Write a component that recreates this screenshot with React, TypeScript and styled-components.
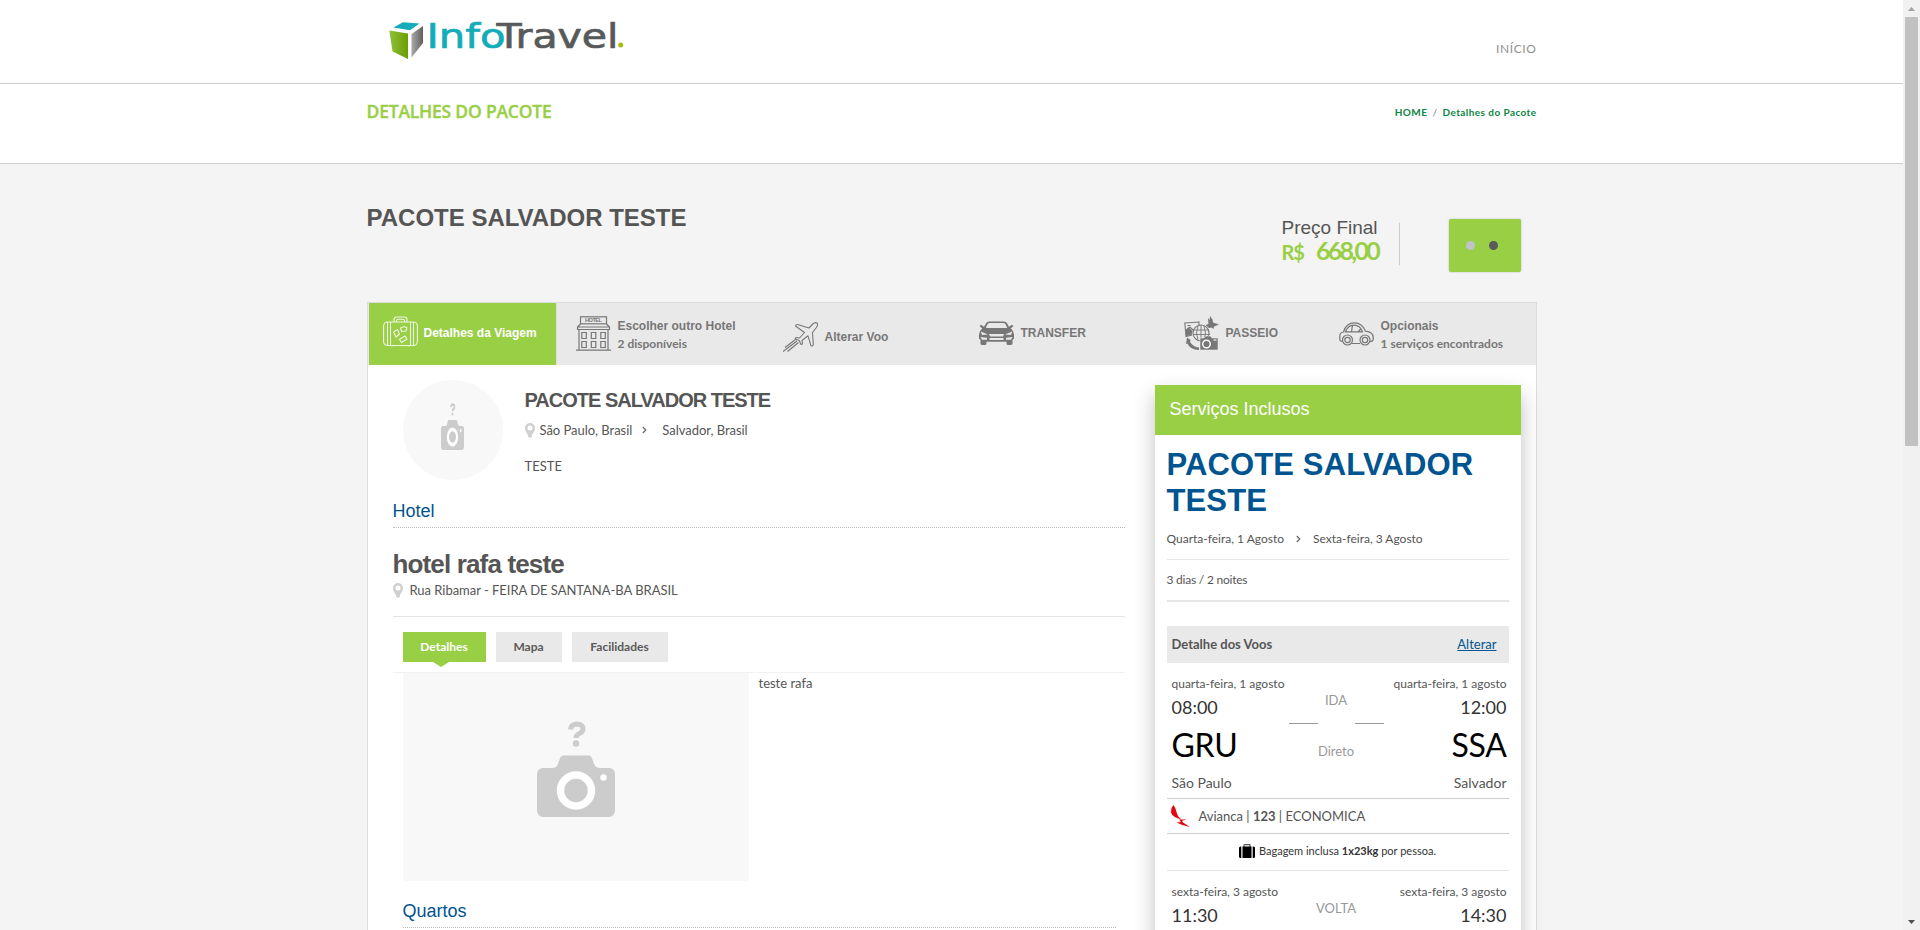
import React from "react";
import styled, { createGlobalStyle, css } from "styled-components";

const GREEN = "#98cf45";
const BLUE = "#005490";
const SANS = `"Liberation Sans", Arial, sans-serif`;
const LATO = `Lato, "Open Sans", sans-serif`;

const GlobalStyle = createGlobalStyle`
  * { box-sizing: border-box; }
  html, body { margin: 0; padding: 0; height: 930px; overflow: hidden; background: #f4f4f4; }
  body { font-family: ${LATO}; font-size: 13px; line-height: 20px; color: #555; }
  h1, h2, h3, p { margin: 0; }
  svg { display: block; flex: none; }
`;

const Window = styled.div`
  display: flex;
  width: 1920px;
  height: 930px;
  overflow: hidden;
`;

const Page = styled.div`
  width: 1903px;
  height: 930px;
  overflow: hidden;
`;

const Scrollbar = styled.div`
  width: 17px;
  height: 930px;
  background: #f1f1f1;
  display: flex;
  flex-direction: column;
  align-items: center;
`;

const ScrollArrow = styled.div`
  height: 17px;
  display: flex;
  align-items: center;
  justify-content: center;
`;

const Thumb = styled.div`
  width: 13px;
  height: 429px;
  margin: 0 0 auto;
  background: #c1c1c1;
`;

const Bar = styled.header<{ $height: number }>`
  height: ${(p) => p.$height}px;
  background: #fff;
  border-bottom: 1px solid #ccc;
`;

const Container = styled.div`
  width: 1170px;
  margin: 0 auto;
  display: flex;
  justify-content: space-between;
  align-items: flex-start;
`;

const LogoLink = styled.a`
  padding: 8px 0 0 21.5px;
`;

const NavLink = styled.a`
  margin-top: 39px;
  font-size: 12px;
  letter-spacing: 0.6px;
  color: #909090;
`;

const SectionTitle = styled.h2`
  margin-top: 14px;
  font: 600 17.5px/26px "Open Sans", sans-serif;
  letter-spacing: -0.2px;
  color: ${GREEN};
  -webkit-text-stroke: 0.35px ${GREEN};
`;

const Crumbs = styled.nav`
  display: flex;
  gap: 5px;
  margin-top: 18px;
  font-size: 10px;
  font-weight: 700;
  letter-spacing: 0.43px;
  color: #999;
  a { color: #0c8442; }
`;

const PackageTitle = styled.h1`
  margin-top: 39px;
  font: 700 24px/30px ${SANS};
  color: #555;
`;

const Offer = styled.div`
  height: 138px;
  padding-right: 16px;
  display: flex;
  align-items: flex-start;
`;

const Price = styled.div`
  width: 117px;
  margin-top: 53px;
`;

const PriceLabel = styled.div`
  font: 400 19px/22px ${SANS};
  color: #555;
`;

const PriceValue = styled.div`
  display: flex;
  align-items: baseline;
  gap: 12px;
  height: 24px;
  line-height: 22px;
  color: ${GREEN};
  font-weight: 700;
`;

const Currency = styled.span`
  font-size: 20px;
  letter-spacing: -1px;
`;

const Amount = styled.span`
  font-size: 25px;
  letter-spacing: -2.7px;
`;

const Divider = styled.div`
  width: 1px;
  height: 42px;
  margin-top: 59px;
  background: #ccc;
`;

const LoadingButton = styled.button`
  width: 72px;
  height: 53px;
  margin: 55px 0 0 49px;
  padding: 0 0 0 17px;
  border: 0;
  border-radius: 2px;
  background: ${GREEN};
  box-shadow: 0 0 2px rgba(0, 0, 0, 0.25);
  display: flex;
  align-items: center;
  gap: 14px;
`;

const Dot = styled.i<{ $color: string }>`
  width: 9px;
  height: 9px;
  border-radius: 50%;
  background: ${(p) => p.$color};
`;

const Panel = styled.main`
  width: 1170px;
  height: 640px;
  margin: 0 auto;
  background: #fff;
  border: 1px solid #dcdcdc;
`;

const Steps = styled.nav`
  display: flex;
  height: 62px;
  padding-left: 1px;
  background: #e9e9e9;
`;

const Step = styled.a<{ $width: number; $active?: boolean; $drop: number }>`
  width: ${(p) => p.$width}px;
  height: 62px;
  padding: ${(p) => Math.max(p.$drop, 0)}px 0 ${(p) => Math.max(-p.$drop, 0)}px
    ${(p) => (p.$active ? 14 : 19)}px;
  display: flex;
  align-items: center;
  gap: ${(p) => (p.$active ? 6 : 7)}px;
  color: #777;
  font: 700 12px/18px ${SANS};
  ${(p) =>
    p.$active &&
    css`
      color: #fff;
      background: ${GREEN};
      width: ${p.$width + 1}px;
      border-right: 1px solid #dedede;
    `}
`;

const StepLabel = styled.div`
  padding-top: 2px;
  small { display: block; font: 700 12px/18px ${LATO}; }
`;

const Body = styled.div`
  display: flex;
  padding: 0 15px 0 25px;
  justify-content: space-between;
  align-items: flex-start;
`;

const Details = styled.section`
  width: 732px;
  padding-top: 15px;
`;

const Summary = styled.div`
  display: flex;
  height: 100px;
  padding-left: 10px;
  gap: 22px;
`;

const Thumbnail = styled.div`
  width: 100px;
  height: 100px;
  border-radius: 50%;
  background: #f8f8f8;
  display: flex;
  justify-content: center;
  padding-top: 23px;
`;

const SummaryTitle = styled.h2`
  margin-top: 8px;
  font: 700 20px/24px ${SANS};
  letter-spacing: -1px;
  color: #555;
`;

const Place = styled.div<{ $gap: number; $top: number }>`
  display: flex;
  align-items: center;
  gap: ${(p) => p.$gap}px;
  height: 20px;
  margin-top: ${(p) => p.$top}px;
  letter-spacing: -0.03px;
`;

const Arrow = styled.span<{ $before: number; $after: number }>`
  margin: 0 ${(p) => p.$after}px 0 ${(p) => p.$before}px;
`;

const Note = styled.p`
  margin-top: 16px;
`;

const Heading = styled.h3<{ $top: number; $inset?: boolean }>`
  margin-top: ${(p) => p.$top}px;
  ${(p) => p.$inset && "margin-left: 10px; margin-right: 9px;"}
  padding-bottom: 4px;
  font: 400 18px/24px ${SANS};
  color: ${BLUE};
  border-bottom: 1px dotted #bbb;
`;

const HotelBox = styled.div`
  padding: 21px 0 16px;
  border-bottom: 1px solid #e4e4e4;
`;

const HotelName = styled.h2`
  font: 700 26px/30px ${SANS};
  letter-spacing: -0.85px;
  color: #555;
`;

const Tabs = styled.div`
  display: flex;
  gap: 10px;
  height: 56px;
  padding: 15px 10px 10px;
  border-bottom: 1px solid #f2f2f2;
`;

const Tab = styled.a<{ $width: number; $active?: boolean }>`
  position: relative;
  width: ${(p) => p.$width}px;
  height: 30px;
  text-align: center;
  font-size: 12px;
  font-weight: 700;
  line-height: 29px;
  background: ${(p) => (p.$active ? GREEN : "#e9e9e9")};
  color: ${(p) => (p.$active ? "#fff" : "#5a5a5a")};
  ${(p) =>
    p.$active &&
    css`
      &::after {
        content: "";
        position: absolute;
        left: 30px;
        top: 30px;
        border: 8px solid transparent;
        border-top: 5px solid ${GREEN};
        border-bottom: 0;
      }
    `}
`;

const Gallery = styled.div`
  display: flex;
  gap: 10px;
  padding-left: 10px;
`;

const Photo = styled.div`
  width: 346px;
  height: 208px;
  background: #f8f8f8;
  display: flex;
  justify-content: center;
  padding-top: 48px;
`;

const Sidebar = styled.aside`
  width: 366px;
  height: 620px;
  margin-top: 20px;
  background: #fff;
  box-shadow: 0 10px 20px rgba(0, 0, 0, 0.25);
`;

const SidebarHeader = styled.div`
  height: 50px;
  padding-left: 15px;
  background: ${GREEN};
  color: #fff;
  font: 400 18px/48px ${SANS};
`;

const SidebarBody = styled.div`
  padding: 12px 12px 0;
`;

const SidebarTitle = styled.h1`
  height: 72px;
  font: 700 31px/36px ${SANS};
  letter-spacing: 0.12px;
  color: ${BLUE};
`;

const InfoLine = styled.div<{ $rule: number }>`
  display: flex;
  align-items: center;
  padding: 10px 0;
  font-size: 12px;
  border-bottom: ${(p) => p.$rule}px solid #e7e7e7;
`;

const Nights = styled.span`
  letter-spacing: -0.22px;
`;

const FlightsBar = styled.div`
  height: 37px;
  margin-top: 24px;
  padding: 0 12px 2px 5px;
  display: flex;
  align-items: center;
  justify-content: space-between;
  background: #e9e9e9;
  strong { font-weight: 700; }
  a { color: ${BLUE}; text-decoration: underline; }
`;

const Flight = styled.div`
  display: flex;
  height: 136px;
  padding: 11px 2px 0 5px;
  border-bottom: 1px solid #ccc;
`;

const Stop = styled.div<{ $end?: boolean }>`
  width: ${(p) => (p.$end ? 123 : 117)}px;
  text-align: ${(p) => (p.$end ? "right" : "left")};
`;

const StopDate = styled.div`
  font-size: 12px;
  white-space: nowrap;
`;

const StopTime = styled.div`
  margin-top: 2px;
  font-size: 18px;
  line-height: 22px;
  color: #333;
`;

const StopCode = styled.div`
  margin-top: 7px;
  font-size: 32px;
  line-height: 40px;
  letter-spacing: -0.3px;
  color: #000;
`;

const StopCity = styled.div`
  margin-top: 8px;
  font-size: 14px;
`;

const Route = styled.div`
  width: 95px;
  padding-top: 16px;
  text-align: center;
  color: #999;
`;

const RouteLines = styled.div`
  display: flex;
  justify-content: space-between;
  height: 31px;
  padding-top: 13px;
  &::before, &::after {
    content: "";
    width: 29px;
    height: 1px;
    background: #999;
  }
`;

const Airline = styled.div`
  display: flex;
  align-items: center;
  gap: 9px;
  height: 35px;
  padding-left: 4px;
  border-bottom: 1px solid #ccc;
`;

const Baggage = styled.div`
  display: flex;
  align-items: center;
  justify-content: center;
  gap: 4px;
  height: 37px;
  padding-bottom: 3px;
  font-size: 11px;
  color: #333;
  border-bottom: 1px solid #e5e5e5;
`;

function Logo() {
  return (
    <svg width="240" height="56" viewBox="388 8 240 56">
      <defs>
        <linearGradient id="face" x1="0" x2="1">
          <stop offset="0" stopColor="#8fc13a" />
          <stop offset="1" stopColor="#6d9c05" />
        </linearGradient>
        <linearGradient id="side" x1="0" x2="1">
          <stop offset="0" stopColor="#aaa" />
          <stop offset="1" stopColor="#606060" />
        </linearGradient>
      </defs>
      <path d="M393.500 27.500L403 22.200L419.500 23.500L410 30.300Z" fill="#13acb8" />
      <path d="M389.300 30.500L408 33.500V59L392.500 51.500Z" fill="url(#face)" />
      <path d="M411.500 34L423 26V43L411.500 57.500Z" fill="url(#side)" />
      <g fontFamily="DejaVu Sans, sans-serif" fontSize="34" strokeWidth=".7">
        <text x="426.500" y="47.500" fill="#13acb8" stroke="#13acb8" textLength="79" lengthAdjust="spacingAndGlyphs">Info</text>
        <text x="496.500" y="47.500" fill="#575a5b" stroke="#575a5b" textLength="122" lengthAdjust="spacingAndGlyphs">Travel</text>
      </g>
      <circle cx="620.700" cy="45" r="2.500" fill="#a9bd0b" />
    </svg>
  );
}

function Suitcase() {
  return (
    <svg width="35" height="35" viewBox="0 0 35 35" fill="none" stroke="#fff" strokeWidth="1.1" opacity=".85">
      <rect x=".6" y="6" width="33.8" height="23.5" rx="4" />
      <path d="M4.500 6v23.500M7.500 6v23.500M27.500 6v23.500M30.500 6v23.500M11 6V3.500Q11 1 13.500 1h8Q24 1 24 3.500V6M13.500 6V4.500Q13.500 3.200 15 3.200h5Q21.500 3.200 21.500 4.500V6M9 30.500v-1M26 30.500v-1" />
      <path d="M10.500 16l4-2.500 2 4.500-3.500 3zM17.500 12l4-1.500 2.500 1.500-1 3-4.500.5zM16.500 23.500l5.500-3.500 2 3-5.500 3.500z" />
    </svg>
  );
}

function HotelIcon() {
  return (
    <svg width="35" height="36" viewBox="0 0 35 36" fill="none" stroke="#777" strokeWidth="1.200">
      <rect x="4.500" y=".8" width="26" height="7" />
      <text x="17.500" y="6.400" fontFamily={SANS} fontSize="5.600" fontWeight="700" textAnchor="middle" fill="#777" stroke="none" textLength="17">HOTEL</text>
      <path d="M4.500 8L1.500 11V13.500H33.500V11L30.500 8M1.500 11H33.500M3 13.500V34M32 13.500V34M0 34.200H35" />
      <path d="M5.800 16.500h4.500v6H5.800zM15.300 16.500h4.500v6h-4.500zM24.800 16.500h4.500v6h-4.500zM5.800 25.500h4.500v6H5.800zM15.300 25.500h4.500v6h-4.500zM24.800 25.500h4.500v6h-4.500z" />
    </svg>
  );
}

function PlaneIcon() {
  return (
    <svg width="35" height="35" viewBox="0 0 35 35" fill="none" stroke="#777" strokeWidth="1.100" strokeLinejoin="round">
      <path d="M34.300 3.200C33 2.400 31 2.800 29.800 4L26 8 14.500 4.500C13.300 4.300 12.500 5.300 12.800 6.300L21.500 12.500 16.500 18 12.800 17.500 12.200 19 16.200 20.500 18 24.500 19.500 24 19 20.500 25 15.800 28 25.800C29 26.300 30.200 25.500 30.300 24.500L29.500 12.500 33 8C34.200 6.500 35 4.500 34.300 3.200Z" />
      <path d="M12.500 19.500L2 27.500M14 21L0 31.500M15.500 22.500L4.500 31.500" />
    </svg>
  );
}

function CarFront() {
  return (
    <svg width="35" height="24" viewBox="0 0 35 24">
      <path fillRule="evenodd" fill="#777" d="M10 .5H25Q27 .7 28 2.300L30 5.800 33 3.800 34.500 5 31.800 7.500Q35 10 35 13.500V17.500L33.500 19V23Q33 24 31.500 24H29Q27.700 24 27.500 22.500V20.800H7.500V22.500Q7.300 24 6 24H3.500Q2 24 1.500 23V19L0 17.500V13.500Q0 10 3.200 7.500L.5 5 2 3.800 5 5.800 7 2.300Q8 .7 10 .5ZM10.500 2Q9 2.100 8.300 3.500L6.800 7H28.200L26.700 3.500Q26 2.100 24.500 2ZM1.800 10.500L9 13.500 3 14ZM33.200 10.500L26 13.500 32 14ZM10 13H25L24 15.500H11ZM1.500 16L8 16.800V18.800H3ZM33.500 16L27 16.800V18.800H32ZM10.500 17H24.500V19H10.500Z" />
    </svg>
  );
}

function TourIcon() {
  return (
    <svg width="35" height="35" viewBox="0 0 35 35" fill="none" stroke="#777" strokeWidth="1.100">
      <path d="M8 19L2 20.500 .8 7 15 6V10M3 15l3-4 3 3M3.500 9.500h3" />
      <path d="M1.500 14l3-3 4 4-1 4-5.500 1z" fill="#777" stroke="none" />
      <circle cx="17" cy="17" r="8" />
      <path d="M9 14h16M9 18.500h17M17 9v16M14 10q-3 7 0 14M20 10q3 7 0 14" strokeWidth=".9" />
      <path d="M25 12L21.500 9 24.500 8 24 2 25.800 4 26 0 28.500 3.500 29 6.500 35 8.500 30 10.500 29.500 13 27.500 11.500Z" fill="#777" stroke="none" />
      <path d="M3 21.500L6.500 24 6 26Q9.500 31 15 31.500V34Q6 34 3.500 27.500L2 28Z" fill="#777" stroke="none" />
      <path d="M16 22H20L21.500 20H26.500L28 22H34V34H16Z" fill="#777" stroke="#e9e9e9" strokeWidth=".6" />
      <circle cx="22.500" cy="28" r="3.800" stroke="#fff" strokeWidth="1.400" />
      <path d="M29.500 24h3" stroke="#fff" />
    </svg>
  );
}

function CarSide() {
  return (
    <svg width="35" height="24" viewBox="0 0 35 24" fill="none" stroke="#777" strokeWidth="1.200">
      <path d="M3.500 19.500Q.8 19.500 .8 17V14Q.8 10.500 4.500 10Q7 .8 15.500 .8Q23 .8 26.500 9.200Q34.200 10 34.200 15.500V17.500Q34 19.500 31 19.500M13 21.500H21" />
      <path d="M6.500 9.800Q9 3.200 15 3.200Q21 3.200 23.500 9.800ZM13.500 3.300L12.500 9.800M19.500 9.500l2.500-3" />
      <circle cx="8.500" cy="18" r="5" />
      <circle cx="8.500" cy="18" r="2.700" />
      <circle cx="26" cy="18" r="5" />
      <circle cx="26" cy="18" r="2.700" />
    </svg>
  );
}

function Pin() {
  return (
    <svg width="10" height="15" viewBox="0 0 10 15">
      <path fillRule="evenodd" fill="#d0d0d0" d="M5 0A5 5 0 0 1 10 5C10 8.500 7 10.500 6.700 14Q5 15.500 3.300 14C3 10.500 0 8.500 0 5A5 5 0 0 1 5 0ZM5 2.500A2.500 2.500 0 1 0 5 7.500A2.500 2.500 0 1 0 5 2.500Z" />
    </svg>
  );
}

function Chevron() {
  return (
    <svg width="5" height="8" viewBox="0 0 5 8" fill="none" stroke="#666" strokeWidth="1.200">
      <path d="M.8 1L3.800 4L.8 7" />
    </svg>
  );
}

function NoPhoto({ width, height }: { width: number; height: number }) {
  return (
    <svg width={width} height={height} viewBox="0 0 78 96" preserveAspectRatio="none">
      <path d="M33.500 8.500Q34 3.500 39.500 3Q46 3 46 8Q46 11 42.500 12.500Q39 13.800 39 17" fill="none" stroke="#ccc" strokeWidth="5" />
      <circle cx="39" cy="22.500" r="3.200" fill="#ccc" />
      <path d="M6 47H16Q20 46.500 21 43L23 37Q24 34.500 26 34.500H52Q54 34.500 55 37L57 43Q58.500 46.500 62 47H72Q78 47.500 78 53V90Q77.500 95.500 72 96H6Q.5 95.500 0 90V53Q.5 47.500 6 47Z" fill="#ccc" />
      <circle cx="39" cy="69.500" r="15.500" fill="none" stroke="#fff" strokeWidth="7.500" />
      <circle cx="66.500" cy="56.500" r="3.200" fill="#fff" />
    </svg>
  );
}

function AviancaMark() {
  return (
    <svg width="19" height="22" viewBox="0 0 19 22" fill="#e30613">
      <path d="M2.500 0Q-.5 3 .2 8Q1.500 12 10.500 14.500Q6.500 11.500 5.500 7Q4.800 3 2.500 0Z" />
      <path d="M8 14.500H16L11 15.700L12 17.500L19 22Q11 20.500 5.500 17.500L10 17Z" />
    </svg>
  );
}

function BagIcon() {
  return (
    <svg width="16" height="14" viewBox="0 0 16 14">
      <path d="M5 3V1.200Q5 .7 5.500 .7H10.500Q11 .7 11 1.200V3" fill="none" stroke="#555" strokeWidth="1.200" />
      <path d="M3.500 2.500H12.500V14H3.500ZM2.300 2.500V14H1.500Q0 14 0 12.500V4Q0 2.500 1.500 2.500ZM13.700 2.500V14H14.500Q16 14 16 12.500V4Q16 2.500 14.500 2.500Z" fill="#000" />
    </svg>
  );
}

type Leg = { date: string; time: string; code?: string; city?: string };

function FlightLeg({ from, to, kind, stops }: { from: Leg; to: Leg; kind: string; stops?: string }) {
  const stop = (leg: Leg, end?: boolean) => (
    <Stop $end={end}>
      <StopDate>{leg.date}</StopDate>
      <StopTime>{leg.time}</StopTime>
      {leg.code && <StopCode>{leg.code}</StopCode>}
      {leg.city && <StopCity>{leg.city}</StopCity>}
    </Stop>
  );
  return (
    <Flight>
      {stop(from)}
      <Route>
        <div>{kind}</div>
        <RouteLines />
        {stops && <div>{stops}</div>}
      </Route>
      {stop(to, true)}
    </Flight>
  );
}

export default function App() {
  return (
    <Window>
      <GlobalStyle />
      <Page>
        <Bar $height={84}>
          <Container>
            <LogoLink><Logo /></LogoLink>
            <NavLink>INÍCIO</NavLink>
          </Container>
        </Bar>
        <Bar $height={80}>
          <Container>
            <SectionTitle>DETALHES DO PACOTE</SectionTitle>
            <Crumbs><a>HOME</a><span>/</span><a>Detalhes do Pacote</a></Crumbs>
          </Container>
        </Bar>
        <Container>
          <PackageTitle>PACOTE SALVADOR TESTE</PackageTitle>
          <Offer>
            <Price>
              <PriceLabel>Preço Final</PriceLabel>
              <PriceValue><Currency>R$</Currency><Amount>668,00</Amount></PriceValue>
            </Price>
            <Divider />
            <LoadingButton><Dot $color="#bdc3c7" /><Dot $color="#5a5a5a" /></LoadingButton>
          </Offer>
        </Container>
        <Panel>
          <Steps>
            <Step $width={187} $drop={-2} $active><Suitcase />Detalhes da Viagem</Step>
            <Step $width={207} $drop={-1}><HotelIcon /><StepLabel>Escolher outro Hotel<small>2 disponíveis</small></StepLabel></Step>
            <Step $width={196} $drop={6}><PlaneIcon />Alterar Voo</Step>
            <Step $width={205} $drop={-2}><CarFront />TRANSFER</Step>
            <Step $width={155} $drop={-2}><TourIcon />PASSEIO</Step>
            <Step $width={216} $drop={0}><CarSide /><StepLabel>Opcionais<small>1 serviços encontrados</small></StepLabel></Step>
          </Steps>
          <Body>
            <Details>
              <Summary>
                <Thumbnail><NoPhoto width={23} height={47} /></Thumbnail>
                <div>
                  <SummaryTitle>PACOTE SALVADOR TESTE</SummaryTitle>
                  <Place $gap={5} $top={8}>
                    <Pin />
                    <span>São Paulo, Brasil</span>
                    <Arrow $before={5} $after={10}><Chevron /></Arrow>
                    <span>Salvador, Brasil</span>
                  </Place>
                  <Note>TESTE</Note>
                </div>
              </Summary>
              <Heading $top={19}>Hotel</Heading>
              <HotelBox>
                <HotelName>hotel rafa teste</HotelName>
                <Place $gap={7} $top={1}><Pin /><span>Rua Ribamar - FEIRA DE SANTANA-BA BRASIL</span></Place>
              </HotelBox>
              <Tabs>
                <Tab $width={83} $active>Detalhes</Tab>
                <Tab $width={66}>Mapa</Tab>
                <Tab $width={96}>Facilidades</Tab>
              </Tabs>
              <Gallery>
                <Photo><NoPhoto width={78} height={96} /></Photo>
                <p>teste rafa</p>
              </Gallery>
              <Heading $top={18} $inset>Quartos</Heading>
            </Details>
            <Sidebar>
              <SidebarHeader>Serviços Inclusos</SidebarHeader>
              <SidebarBody>
                <SidebarTitle>PACOTE SALVADOR TESTE</SidebarTitle>
                <InfoLine $rule={1}>
                  Quarta-feira, 1 Agosto<Arrow $before={12} $after={12}><Chevron /></Arrow>Sexta-feira, 3 Agosto
                </InfoLine>
                <InfoLine $rule={2}><Nights>3 dias / 2 noites</Nights></InfoLine>
                <FlightsBar><strong>Detalhe dos Voos</strong><a>Alterar</a></FlightsBar>
                <FlightLeg
                  kind="IDA"
                  stops="Direto"
                  from={{ date: "quarta-feira, 1 agosto", time: "08:00", code: "GRU", city: "São Paulo" }}
                  to={{ date: "quarta-feira, 1 agosto", time: "12:00", code: "SSA", city: "Salvador" }}
                />
                <Airline><AviancaMark /><span>Avianca | <b>123</b> | ECONOMICA</span></Airline>
                <Baggage><BagIcon /><span>Bagagem inclusa <b>1x23kg</b> por pessoa.</span></Baggage>
                <FlightLeg
                  kind="VOLTA"
                  from={{ date: "sexta-feira, 3 agosto", time: "11:30" }}
                  to={{ date: "sexta-feira, 3 agosto", time: "14:30" }}
                />
              </SidebarBody>
            </Sidebar>
          </Body>
        </Panel>
      </Page>
      <Scrollbar>
        <ScrollArrow><svg width="7" height="4"><path d="M3.500 0L7 4H0Z" fill="#a3a3a3" /></svg></ScrollArrow>
        <Thumb />
        <ScrollArrow><svg width="7" height="4"><path d="M3.500 4L7 0H0Z" fill="#505050" /></svg></ScrollArrow>
      </Scrollbar>
    </Window>
  );
}
